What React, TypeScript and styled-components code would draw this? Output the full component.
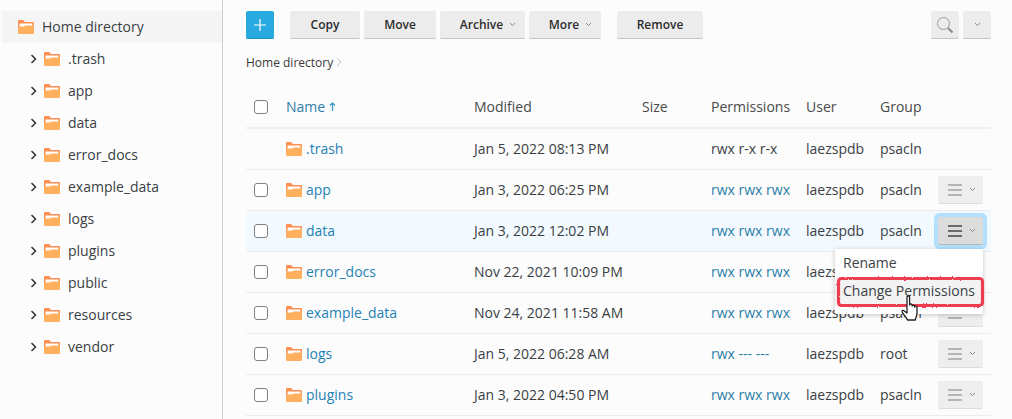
import React from 'react';
import styled, { createGlobalStyle } from 'styled-components';

const GlobalStyle = createGlobalStyle`
  html, body {
    margin: 0;
    padding: 0;
    height: 100%;
    overflow: hidden;
    background: #fcfcfc;
  }
  body {
    font-family: "Open Sans", "Liberation Sans", sans-serif;
    font-size: 14px;
    color: #333;
  }
`;

const Page = styled.div`
  display: flex;
  width: 1012px;
  height: 419px;
  overflow: hidden;
`;

const Sidebar = styled.aside`
  box-sizing: border-box;
  width: 223px;
  flex: none;
  padding: 11px 0 0 2px;
  border-right: 1px solid #cfcfcf;
`;

const TreeRow = styled.div<{ $root?: boolean }>`
  display: flex;
  align-items: center;
  height: 32px;
  padding-left: ${({ $root }) => ($root ? '16px' : '28px')};
  background: ${({ $root }) => ($root ? '#f5f5f5' : 'transparent')};
  color: #3a3f44;
`;

const TreeChevron = styled.svg`
  width: 8px;
  height: 10px;
  margin-right: 6px;
  flex: none;
`;

const TreeLabel = styled.span`
  margin-left: 8px;
  margin-bottom: 2px;
`;

const Main = styled.main`
  box-sizing: border-box;
  width: 745px;
  margin-left: 23px;
  padding-top: 11px;
  flex: none;
`;

const Toolbar = styled.div`
  display: flex;
  align-items: flex-start;
  height: 28px;
`;

const Button = styled.button<{ $width: number; $gap?: number; $menu?: boolean }>`
  box-sizing: border-box;
  display: flex;
  align-items: center;
  justify-content: center;
  gap: 6px;
  width: ${({ $width }) => $width}px;
  height: 28px;
  margin-left: ${({ $gap }) => $gap ?? 4}px;
  padding: 0 0 0 ${({ $menu }) => ($menu ? '11px' : '0')};
  border: 0;
  border-bottom: 1px solid #c4c4c4;
  border-radius: 2px;
  background: #ececec;
  color: #2c2c2c;
  font: 600 12px "Open Sans", "Liberation Sans", sans-serif;
`;

const AddButton = styled(Button)`
  margin-left: 0;
  background: #28aae1;
  border-bottom-color: #1c8fc4;
`;

const Spacer = styled.div`
  flex: 1;
`;

const Breadcrumb = styled.div`
  display: flex;
  align-items: center;
  gap: 3px;
  height: 18px;
  margin-top: 14px;
  font-size: 12px;
  color: #3a3a3a;
`;

const gridColumns = '40px 188px 168px 69px 95px 74px 58px 1fr';

const HeadRow = styled.div`
  display: grid;
  grid-template-columns: ${gridColumns};
  align-items: center;
  box-sizing: border-box;
  height: 42px;
  margin-top: 16px;
  border-bottom: 2px solid #efefef;
  color: #4a4a4a;
`;

const Row = styled.div<{ $active?: boolean }>`
  display: grid;
  grid-template-columns: ${gridColumns};
  align-items: center;
  box-sizing: border-box;
  height: 41px;
  border-bottom: 1px solid #ececec;
  background: ${({ $active }) => ($active ? '#f2faff' : 'transparent')};
  color: #3a3f44;
`;

const Cell = styled.div`
  margin-bottom: 2px;
  white-space: nowrap;
`;

const CheckCell = styled.div`
  padding-left: 8px;
  display: flex;
`;

const Checkbox = styled.span`
  box-sizing: border-box;
  display: block;
  width: 14px;
  height: 14px;
  border: 1px solid #7f7f7f;
  border-radius: 3px;
  background: #fff;
`;

const SortName = styled(Cell)`
  display: flex;
  align-items: center;
  gap: 4px;
  color: #2f7ca8;
`;

const NameCell = styled.div`
  display: flex;
  align-items: center;
  gap: 4px;
  color: #1f82b5;
`;

const NameText = styled.span`
  margin-bottom: 2px;
`;

const Perm = styled(Cell)<{ $link: boolean }>`
  color: ${({ $link }) => ($link ? '#2a7ea8' : '#3a3f44')};
`;

const ActionCell = styled.div`
  position: relative;
  display: flex;
`;

const RowMenuButton = styled.button<{ $open?: boolean }>`
  box-sizing: border-box;
  display: flex;
  align-items: center;
  justify-content: center;
  gap: 7px;
  width: 45px;
  height: 28px;
  padding: 0 0 0 2px;
  border: 0;
  border-bottom: 1px solid ${({ $open }) => ($open ? '#b5b5b5' : '#dcdcdc')};
  border-radius: 2px;
  background: ${({ $open }) => ($open ? '#dcdcdc' : '#eeeeee')};
  box-shadow: ${({ $open }) => ($open ? '0 0 0 4px #b3e0ff' : 'none')};
  color: ${({ $open }) => ($open ? '#6a6a6a' : '#b5b5b5')};
`;

const Bars = styled.span`
  display: flex;
  flex-direction: column;
  gap: 3px;
  width: 14px;
  span {
    display: block;
    height: 2px;
    background: currentColor;
  }
`;

const Menu = styled.div`
  position: absolute;
  top: 32px;
  right: 8px;
  z-index: 2;
  width: 148px;
  padding: 1px 0 8px;
  background: #fff;
  border-radius: 2px;
  box-shadow: 0 1px 5px rgba(0, 0, 0, 0.22);
  color: #3a3f44;
`;

const MenuItem = styled.div<{ $marked?: boolean }>`
  position: relative;
  height: 28px;
  line-height: 26px;
  padding-left: 8px;
  white-space: nowrap;
  background: ${({ $marked }) => ($marked ? '#f3f3f3' : 'transparent')};
`;

const RedMark = styled.svg`
  position: absolute;
  left: 1px;
  top: -2px;
  width: 149px;
  height: 32px;
`;

const HandCursor = styled.svg`
  position: absolute;
  left: 66px;
  top: 17px;
  width: 19px;
  height: 26px;
  z-index: 3;
`;

const FolderIcon = () => (
  <svg width="16" height="14" viewBox="0 0 16 14">
    <path d="M0 1a1 1 0 0 1 1-1h4l2 2h8a1 1 0 0 1 1 1v4H0z" fill="#ff8f50" />
    <path d="M1.500 3.500h13v4h-13z" fill="#fff" />
    <path d="M0 6.500h6l1.500-1H16v7.500a1 1 0 0 1-1 1H1a1 1 0 0 1-1-1z" fill="#ffb05e" />
  </svg>
);

const SmallChevron = () => (
  <svg width="7" height="5" viewBox="0 0 7 5">
    <path d="M1 1l2.500 2.500L6 1" fill="none" stroke="#8a8a8a" strokeWidth="1" />
  </svg>
);

const MenuBars = () => (
  <Bars>
    <span />
    <span />
    <span />
  </Bars>
);

const treeItems = ['.trash', 'app', 'data', 'error_docs', 'example_data', 'logs', 'plugins', 'public', 'resources', 'vendor'];

const rows = [
  { name: '.trash', modified: 'Jan 5, 2022 08:13 PM', perm: 'rwx r-x r-x', group: 'psacln', locked: true },
  { name: 'app', modified: 'Jan 3, 2022 06:25 PM', perm: 'rwx rwx rwx', group: 'psacln' },
  { name: 'data', modified: 'Jan 3, 2022 12:02 PM', perm: 'rwx rwx rwx', group: 'psacln', open: true },
  { name: 'error_docs', modified: 'Nov 22, 2021 10:09 PM', perm: 'rwx rwx rwx', group: 'psacln' },
  { name: 'example_data', modified: 'Nov 24, 2021 11:58 AM', perm: 'rwx rwx rwx', group: 'psacln' },
  { name: 'logs', modified: 'Jan 5, 2022 06:28 AM', perm: 'rwx --- ---', group: 'root' },
  { name: 'plugins', modified: 'Jan 3, 2022 04:50 PM', perm: 'rwx rwx rwx', group: 'psacln' },
];

const App: React.FC = () => {
  return (
    <>
      <GlobalStyle />
      <Page>
        <Sidebar>
          <TreeRow $root>
            <FolderIcon />
            <TreeLabel>Home directory</TreeLabel>
          </TreeRow>
          {treeItems.map((item) => (
            <TreeRow key={item}>
              <TreeChevron viewBox="0 0 8 10">
                <path d="M1.500 1l4 4-4 4" fill="none" stroke="#333" strokeWidth="1.500" />
              </TreeChevron>
              <FolderIcon />
              <TreeLabel>{item}</TreeLabel>
            </TreeRow>
          ))}
        </Sidebar>

        <Main>
          <Toolbar>
            <AddButton $width={28}>
              <svg width="14" height="14" viewBox="0 0 14 14">
                <path d="M7 1v12M1 7h12" stroke="#fff" strokeWidth="1.200" />
              </svg>
            </AddButton>
            <Button $width={70} $gap={16}>Copy</Button>
            <Button $width={72}>Move</Button>
            <Button $width={85} $menu>Archive <SmallChevron /></Button>
            <Button $width={72} $menu>More <SmallChevron /></Button>
            <Button $width={86} $gap={16}>Remove</Button>
            <Spacer />
            <Button $width={28}>
              <svg width="18" height="18" viewBox="0 0 18 18">
                <circle cx="7.500" cy="7.500" r="6" fill="none" stroke="#9a9a9a" strokeWidth="1" />
                <path d="M12 12l4.500 4.500" stroke="#8a8a8a" strokeWidth="2" />
              </svg>
            </Button>
            <Button $width={28}><SmallChevron /></Button>
          </Toolbar>

          <Breadcrumb>
            Home directory
            <svg width="6" height="10" viewBox="0 0 6 10">
              <path d="M1 1l4 4-4 4" fill="none" stroke="#c4c4c4" strokeWidth="1" />
            </svg>
          </Breadcrumb>

          <HeadRow>
            <CheckCell><Checkbox /></CheckCell>
            <SortName>
              Name
              <svg width="7" height="9" viewBox="0 0 7 9">
                <path d="M3.500 9V1.500M1 3.500l2.500-2.500L6 3.500" fill="none" stroke="#3d9ac9" strokeWidth="1.300" />
              </svg>
            </SortName>
            <Cell>Modified</Cell>
            <Cell>Size</Cell>
            <Cell>Permissions</Cell>
            <Cell>User</Cell>
            <Cell>Group</Cell>
          </HeadRow>

          {rows.map((row) => (
            <Row key={row.name} $active={row.open}>
              <CheckCell>{!row.locked && <Checkbox />}</CheckCell>
              <NameCell>
                <FolderIcon />
                <NameText>{row.name}</NameText>
              </NameCell>
              <Cell>{row.modified}</Cell>
              <Cell />
              <Perm $link={!row.locked}>{row.perm}</Perm>
              <Cell>laezspdb</Cell>
              <Cell>{row.group}</Cell>
              <ActionCell>
                {!row.locked && (
                  <RowMenuButton $open={row.open}>
                    <MenuBars />
                    <SmallChevron />
                  </RowMenuButton>
                )}
                {row.open && (
                  <Menu>
                    <MenuItem>Rename</MenuItem>
                    <MenuItem $marked>
                      Change Permissions
                      <RedMark viewBox="0 0 149 32">
                        <defs>
                          <filter id="rough" x="-5%" y="-20%" width="110%" height="140%">
                            <feTurbulence type="fractalNoise" baseFrequency="0.45" numOctaves="2" seed="4" />
                            <feDisplacementMap in="SourceGraphic" scale="2.200" />
                          </filter>
                        </defs>
                        <rect
                          x="2.500"
                          y="2.500"
                          width="144"
                          height="27"
                          rx="3"
                          fill="none"
                          stroke="#ee3d50"
                          strokeWidth="3.200"
                          filter="url(#rough)"
                        />
                      </RedMark>
                      <HandCursor viewBox="0 0 19 26">
                        <path
                          d="M6 2.200c0-1.600 2.600-1.600 2.600 0V10c0-1.400 2.500-1.400 2.500 0v1c0-1.300 2.500-1.300 2.500 0v1c0-1.200 2.400-1.200 2.400 0v6c0 3-1.500 5.500-1.800 7H6.500C5.800 23 3.800 20.800 2 18.500 0.500 16.500 1 14.800 2.600 15.500L6 18z"
                          fill="#fff"
                          stroke="#222"
                          strokeWidth="1.300"
                          strokeLinejoin="round"
                        />
                      </HandCursor>
                    </MenuItem>
                  </Menu>
                )}
              </ActionCell>
            </Row>
          ))}
        </Main>
      </Page>
    </>
  );
};

export default App;
